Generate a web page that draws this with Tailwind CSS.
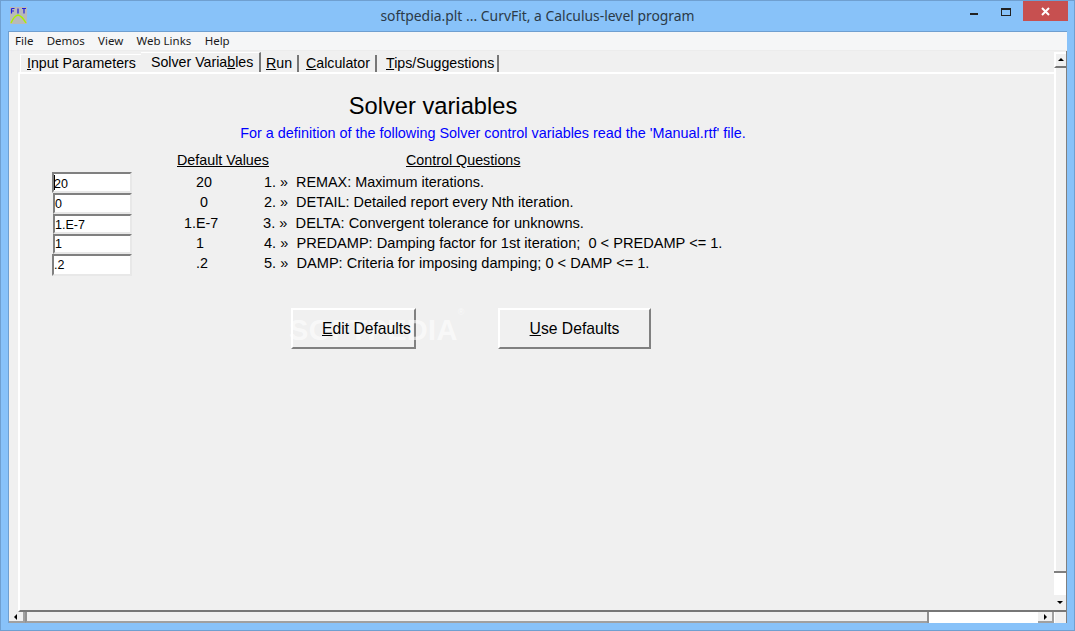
<!DOCTYPE html>
<html>
<head>
<meta charset="utf-8">
<script src="https://cdn.jsdelivr.net/npm/@tailwindcss/browser@4"></script>
</head>
<body class="m-0 overflow-hidden">
<div class="w-[1075px] h-[631px] flex flex-col bg-[#88c2f9] border border-[#6f9fd0] font-['Liberation_Sans',sans-serif] text-black">
  <!-- title bar -->
  <div class="h-[30px] relative flex items-center justify-center shrink-0">
    <svg class="absolute left-[9px] top-[6px]" width="17" height="17" viewBox="0 0 17 17">
      <rect width="17" height="17" fill="#b9b9b9"/>
      <path d="M1 16 Q4 9 8 8 Q12 9 16 16" fill="none" stroke="#a8f000" stroke-width="1.3"/>
      <path d="M1.5 1.5h3M1.5 1.5v5M1.5 4h2.5M8 1.5v5M12 1.5h4M14 1.5v5" fill="none" stroke="#2020e0" stroke-width="1.2"/>
    </svg>
    <span class="text-[13.9px] text-[#2b3a48] font-['Noto_Sans',sans-serif] leading-none mb-[1px]">softpedia.plt ... CurvFit, a Calculus-level program</span>
    <div class="absolute top-0 right-[6px] h-[20px] flex items-start">
      <div class="w-[46px] h-[20px] flex items-center justify-center"><div class="w-[8px] h-[2px] mt-[6px] bg-[#222]"></div></div>
      <div class="w-[18px] h-[20px] flex items-center justify-center mr-[8px]"><div class="w-[10px] h-[8px] mt-[1px] border border-[#222] border-t-2"></div></div>
      <div class="w-[45px] h-[20px] bg-[#c75050] flex items-center justify-center">
        <svg width="9" height="9" viewBox="0 0 9 9"><path d="M1 1L8 8M8 1L1 8" stroke="#fff" stroke-width="2"/></svg>
      </div>
    </div>
  </div>
  <!-- client -->
  <div class="w-[1059px] h-[592px] ml-[7px] bg-[#f0f0f0] border-t border-l border-[#6f9fd0] flex flex-col shrink-0">
    <!-- menu -->
    <div class="h-[19px] bg-[#f5f6f7] flex items-center pl-[6px] gap-[13.3px] text-[11.5px] text-[#1a1a1a] font-['Noto_Sans',sans-serif] shrink-0 border-b border-[#ececec]">
      <span>File</span><span>Demos</span><span>View</span><span>Web Links</span><span>Help</span>
    </div>
    <div class="flex flex-1 min-h-0">
      <div class="flex-1 min-w-0 flex flex-col">
        <!-- tabs -->
        <div class="h-[21px] flex items-end pl-[11px] text-[14.2px] leading-none shrink-0 relative">
          <div class="w-[121px] h-[18px] flex items-center pl-[6px] border-l border-t border-white">
            <span><u>I</u>nput Parameters</span>
          </div>
          <div class="w-[120px] h-[20px] flex items-center pl-[10px] border-t border-white border-r-2 border-r-[#777]">
            <span>Solver Varia<u>b</u>les</span>
          </div>
          <div class="w-[38px] h-[17px] flex items-center pl-[5px] border-r-2 border-r-[#777]"><span><u>R</u>un</span></div>
          <div class="w-[78px] h-[17px] flex items-center pl-[7px] border-r-2 border-r-[#777]"><span><u>C</u>alculator</span></div>
          <div class="w-[122px] h-[17px] flex items-center pl-[9px] border-r-2 border-r-[#777] whitespace-nowrap"><span><u>T</u>ips/Suggestions</span></div>
        </div>
        <!-- content panel -->
        <div class="flex-1 min-h-0 ml-[9px] border-t-2 border-l-2 border-white border-b-2 border-b-[#777] relative">
          <div class="text-center w-[826px] text-[23.7px] leading-[28px] mt-[18px]">Solver variables</div>
          <div class="text-center w-[946px] text-[14.4px] leading-[16px] mt-[5px] text-[#0000ff]">For a definition of the following Solver control variables read the 'Manual.rtf' file.</div>
          <div class="flex mt-[13px]">
            <!-- inputs -->
            <div class="w-[110px] pl-[32px] pt-[18px] flex flex-col text-[12.5px] shrink-0">
              <div class="w-[80px] h-[21px] pt-[3px] bg-white border-2 border-[#808080] border-r-[#e8e8e8] border-b-[#e8e8e8] flex items-center relative"><span class="absolute left-[0px] top-[1px] w-px h-[15px] bg-black"></span>20</div>
              <div class="w-[79px] h-[21px] pt-[2px] ml-[1px] bg-white border-2 border-[#808080] border-r-[#e8e8e8] border-b-[#e8e8e8] flex items-center">0</div>
              <div class="w-[79px] h-[20px] pt-[3px] ml-[1px] bg-white border-2 border-[#808080] border-r-[#e8e8e8] border-b-[#e8e8e8] flex items-center">1.E-7</div>
              <div class="w-[79px] h-[20px] ml-[1px] bg-white border-2 border-[#808080] border-r-[#e8e8e8] border-b-[#e8e8e8] flex items-center">1</div>
              <div class="w-[80px] h-[22px] pt-[1px] bg-white border-2 border-[#808080] border-r-[#e8e8e8] border-b-[#e8e8e8] flex items-center">.2</div>
            </div>
            <!-- default values -->
            <div class="w-[118px] shrink-0 text-[14.3px] leading-[20.25px]">
              <div class="h-[18px] pl-[47px] leading-[12px] whitespace-nowrap"><u>Default Values</u></div>
              <div class="pl-[66px] h-[20.25px]">20</div>
              <div class="pl-[70px] h-[20.25px]">0</div>
              <div class="pl-[54px] h-[20.25px]">1.E-7</div>
              <div class="pl-[66px] h-[20.25px]">1</div>
              <div class="pl-[66px] h-[20.25px]">.2</div>
            </div>
            <!-- questions -->
            <div class="flex-1 text-[14.3px] leading-[20.25px]">
              <div class="h-[18px] pl-[158px] leading-[12px]"><u>Control Questions</u></div>
              <div class="pl-[16px] whitespace-pre text-[14.4px]">1. »  REMAX: Maximum iterations.</div>
              <div class="pl-[16px] whitespace-pre text-[14.45px]">2. »  DETAIL: Detailed report every Nth iteration.</div>
              <div class="pl-[15px] whitespace-pre text-[14.65px]">3. »  DELTA: Convergent tolerance for unknowns.</div>
              <div class="pl-[16px] whitespace-pre text-[14.6px]">4. »  PREDAMP: Damping factor for 1st iteration;  0 &lt; PREDAMP &lt;= 1.</div>
              <div class="pl-[16px] whitespace-pre text-[14.6px]">5. »  DAMP: Criteria for imposing damping; 0 &lt; DAMP &lt;= 1.</div>
            </div>
          </div>
          <!-- buttons -->
          <div class="flex mt-[32px] ml-[271px] gap-[82px] text-[15.7px] leading-none">
            <div class="w-[125px] h-[41px] bg-[#f0f0f0] border-2 border-t-white border-l-white border-r-[#808080] border-b-[#808080] flex items-center pl-[29px] relative">
              <span class="absolute left-[-4px] top-[6px] text-[29px] leading-[28px] font-bold text-white/60 whitespace-nowrap tracking-[0.3px]">SOFTPEDIA<sup class="text-[9px] font-normal align-top">®</sup></span>
              <span class="relative z-10 whitespace-nowrap"><u>E</u>dit Defaults</span>
            </div>
            <div class="w-[153px] h-[41px] bg-[#f0f0f0] border-2 border-t-white border-l-white border-r-[#808080] border-b-[#808080] flex items-center justify-center"><span><u>U</u>se Defaults</span></div>
          </div>
        </div>
        <!-- horizontal scrollbar -->
        <div class="h-[11px] flex shrink-0 items-stretch">
          <div class="w-[16px] border-b-2 border-r-2 border-[#a0a0a0] flex items-center justify-center">
            <svg width="4" height="6" viewBox="0 0 4 6"><path d="M3 0V6L0 3Z" fill="#000"/></svg>
          </div>
          <div class="flex-1 border-l-2 border-[#909090] border-b-2 border-b-[#a0a0a0]"></div>
          <div class="w-[111px] bg-white border-l-2 border-[#909090]"></div>
          <div class="w-[16px] border-b-2 border-r-2 border-[#a0a0a0] flex items-center justify-center">
            <svg width="4" height="6" viewBox="0 0 4 6"><path d="M1 0V6L4 3Z" fill="#000"/></svg>
          </div>
        </div>
      </div>
      <!-- vertical scrollbar -->
      <div class="w-[13px] flex flex-col shrink-0 border-r border-[#808080]">
        <div class="h-[16px] border-t-2 border-l-2 border-white border-b-2 border-b-[#777] flex items-center justify-center mt-[1px]">
          <svg width="6" height="4" viewBox="0 0 6 4"><path d="M0 3L3 0L6 3Z" fill="#000"/></svg>
        </div>
        <div class="flex-1 border-l-2 border-white"></div>
        <div class="h-[24px] bg-white border-t-2 border-[#808080]"></div>
        <div class="h-[17px] flex items-center justify-center border-b-2 border-[#777]">
          <svg width="6" height="4" viewBox="0 0 6 4"><path d="M0 0L3 3L6 0Z" fill="#000"/></svg>
        </div>
        <div class="h-[11px] border-l border-white"></div>
      </div>
    </div>
  </div>
</div>
</body>
</html>
